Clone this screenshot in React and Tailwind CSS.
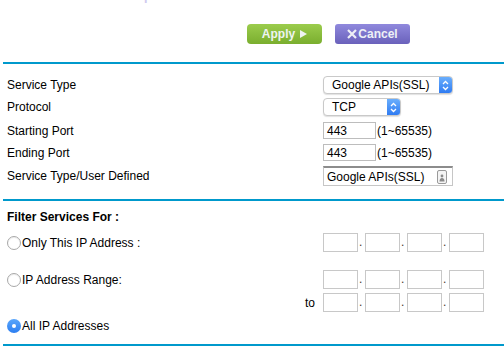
import React from "react";

const Chevrons = () => (
  <svg width="7" height="11" viewBox="0 0 7 11" fill="none">
    <path d="M1 4 L3.5 1.5 L6 4" stroke="white" strokeWidth="1.3" />
    <path d="M1 7 L3.5 9.5 L6 7" stroke="white" strokeWidth="1.3" />
  </svg>
);

const Select = ({ value, width }) => (
  <div
    className={`flex h-full ${width} items-stretch rounded-[4px] border border-[#c9c9c9] bg-white shadow-[0_1px_1px_rgba(0,0,0,0.12)]`}
  >
    <span className="flex flex-1 items-center pl-[8px] text-[12px] text-black">
      {value}
    </span>
    <span className="flex w-[13px] items-center justify-center rounded-r-[3px] bg-gradient-to-b from-[#6aaefc] to-[#2f7bf2]">
      <Chevrons />
    </span>
  </div>
);

const IpBoxes = () => (
  <div className="flex h-full items-center">
    {[0, 1, 2, 3].map((i) => (
      <React.Fragment key={i}>
        <div className="h-full w-[35px] border border-[#c8c8c8] bg-white" />
        {i < 3 && (
          <span className="w-[7px] pl-[1px] text-[12px] leading-[19px] text-[#4a3a2a]">
            .
          </span>
        )}
      </React.Fragment>
    ))}
  </div>
);

const Radio = ({ checked }) =>
  checked ? (
    <span className="flex h-[14px] w-[14px] items-center justify-center rounded-full bg-gradient-to-b from-[#5aa6fb] to-[#2c7ef1]">
      <span className="h-[4px] w-[4px] rounded-full bg-white" />
    </span>
  ) : (
    <span className="h-[14px] w-[14px] rounded-full border border-[#a8a8a8] bg-white shadow-[inset_0_1px_1px_rgba(0,0,0,0.08)]" />
  );

const Rule = ({ className }) => (
  <div className={`ml-[3px] h-[2px] bg-[#0099cc] ${className}`} />
);

export default function App() {
  return (
    <div className="h-[358px] w-[504px] overflow-hidden bg-white font-['Liberation_Sans',Arial,sans-serif] text-[12px] text-black">
      {/* clipped page title */}
      <div className="h-[3px] overflow-hidden pl-[20px]">
        <div className="-mt-[17px] text-[20px] leading-[20px] text-[#cfcbef]">
          Services Setup
        </div>
      </div>

      {/* Buttons */}
      <div className="mt-[21px] flex gap-[13px] pl-[247px]">
        <button className="flex h-[20px] w-[75px] items-center justify-center gap-[5px] rounded-[4px] bg-gradient-to-b from-[#9bcc4c] to-[#7aae2e] text-[12px] font-bold text-[#eef4f2]">
          Apply
          <svg width="7" height="8" viewBox="0 0 7 8">
            <path d="M0 0 L7 4 L0 8 Z" fill="#eef4f2" />
          </svg>
        </button>
        <button className="flex h-[20px] w-[75px] items-center justify-center gap-[1px] rounded-[3px] bg-gradient-to-b from-[#9089dd] to-[#6a61bb] text-[12px] font-bold text-[#eef0f6]">
          <svg width="10" height="10" viewBox="0 0 10 10">
            <path d="M1 1 L9 9 M9 1 L1 9" stroke="#eef0f6" strokeWidth="2.2" />
          </svg>
          Cancel
        </button>
      </div>

      <Rule className="mt-[18px]" />

      {/* Service rows */}
      <div className="mt-[12px] flex h-[18px] items-center">
        <span className="w-[323px] pl-[7px]">Service Type</span>
        <Select value="Google APIs(SSL)" width="w-[130px]" />
      </div>
      <div className="mt-[4px] flex h-[18px] items-center">
        <span className="w-[323px] pl-[7px]">Protocol</span>
        <Select value="TCP" width="w-[78px]" />
      </div>
      <div className="mt-[6px] flex h-[17px] items-center">
        <span className="w-[323px] pl-[7px]">Starting Port</span>
        <div className="flex h-full w-[53px] items-center border border-[#bdbdbd] pl-[3px] text-[12px]">
          443
        </div>
        <span className="ml-[1px]">(1~65535)</span>
      </div>
      <div className="mt-[5px] flex h-[17px] items-center">
        <span className="w-[323px] pl-[7px]">Ending Port</span>
        <div className="flex h-full w-[53px] items-center border border-[#bdbdbd] pl-[3px] text-[12px]">
          443
        </div>
        <span className="ml-[1px]">(1~65535)</span>
      </div>
      <div className="mt-[5px] flex h-[20px] items-center">
        <span className="w-[323px] pl-[7px]">Service Type/User Defined</span>
        <div className="flex h-full w-[130px] items-center justify-between border border-t-2 border-[#c6c6c6] border-t-[#8c8c8c] pl-[3px] pr-[5px]">
          <span>Google APIs(SSL)</span>
          <svg width="10" height="14" viewBox="0 0 10 14">
            <rect x="0.5" y="0.5" width="9" height="13" rx="1.5" fill="#f4f4f4" stroke="#9a9a9a" />
            <circle cx="5" cy="6" r="1.4" fill="#8a8a8a" />
            <path d="M2.5 11.5 Q2.5 8 5 8 Q7.5 8 7.5 11.5 Z" fill="#8a8a8a" />
          </svg>
        </div>
      </div>

      <Rule className="mt-[13px]" />

      {/* Filter section */}
      <div className="mt-[9px] flex h-[14px] items-center pl-[7px] font-bold">
        Filter Services For :
      </div>
      <div className="mt-[9px] flex h-[19px] items-center">
        <span className="flex w-[323px] items-center gap-[1px] pl-[7px]">
          <Radio />
          Only This IP Address :
        </span>
        <IpBoxes />
      </div>
      <div className="mt-[18px] flex h-[19px] items-center">
        <span className="flex w-[323px] items-center gap-[1px] pl-[7px]">
          <Radio />
          IP Address Range:
        </span>
        <IpBoxes />
      </div>
      <div className="mt-[4px] flex h-[19px] items-center">
        <span className="flex w-[323px] justify-end pr-[8px]">to</span>
        <IpBoxes />
      </div>
      <div className="mt-[7px] flex h-[14px] items-center gap-[1px] pl-[7px]">
        <Radio checked />
        All IP Addresses
      </div>

      <Rule className="mt-[11px]" />
    </div>
  );
}
